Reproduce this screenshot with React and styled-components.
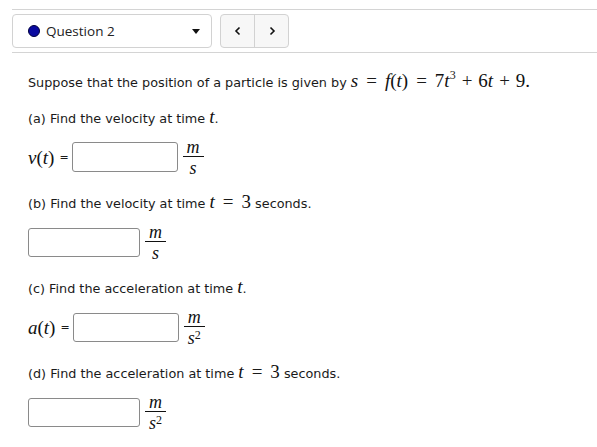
import React from 'react';
import styled, { createGlobalStyle } from 'styled-components';

const Global = createGlobalStyle`
  html, body { margin: 0; padding: 0; background: #fff; }
  body {
    font-family: "DejaVu Sans", Verdana, sans-serif;
    color: #1a1a1a;
    font-size: 12.8px;
  }
`;

const Page = styled.div`
  width: 597px;
  height: 447px;
  overflow: hidden;
  padding-top: 9px;
  box-sizing: border-box;
`;

const Header = styled.div`
  margin-left: 12px;
  border-top: 1px solid #d4d4d4;
  border-bottom: 1px solid #d4d4d4;
  padding: 4px 0;
  display: flex;
  gap: 8px;
`;

const Select = styled.div`
  width: 200px;
  height: 34px;
  box-sizing: border-box;
  border: 1px solid #d2d2d2;
  border-radius: 4px;
  display: flex;
  align-items: center;
  padding: 0 10px 0 15px;
  font-family: "Open Sans", sans-serif;
  font-size: 13.5px;
  color: #222;
`;

const Dot = styled.span`
  width: 12px;
  height: 12px;
  border-radius: 50%;
  background: #0a0aa0;
  border: 1px solid #000040;
  box-sizing: border-box;
  margin-right: 6px;
`;

const Caret = styled.span`
  margin-left: auto;
  width: 0;
  height: 0;
  border-left: 4px solid transparent;
  border-right: 4px solid transparent;
  border-top: 5px solid #111;
  margin-right: 1px;
`;

const NavGroup = styled.div`
  display: flex;
  height: 34px;
  border: 1px solid #d2d2d2;
  border-radius: 4px;
  background: #f7f7f7;
  box-sizing: border-box;
`;

const NavButton = styled.div`
  width: 33px;
  display: flex;
  align-items: center;
  justify-content: center;
  & + & { border-left: 1px solid #d2d2d2; }
`;

const Body = styled.div`
  padding: 0 28px;
`;

const Para = styled.p`
  margin: ${p => p.$top}px 0 0;
  height: 18px;
  line-height: 18px;
  white-space: nowrap;
`;

const M = styled.span`
  font-family: "Liberation Serif", "DejaVu Serif", serif;
  font-style: ${p => (p.$up ? 'normal' : 'italic')};
  font-size: 19px;
  line-height: 1;
  color: #111;
`;

const Op = styled.span`
  font-family: "Liberation Serif", "DejaVu Serif", serif;
  font-size: 19px;
  line-height: 1;
  margin: 0 ${p => p.$sp || 6}px;
`;

const AnswerRow = styled.div`
  display: flex;
  align-items: center;
  margin-top: 14px;
  height: 36px;
`;

const Label = styled.span`
  display: inline-flex;
  align-items: center;
  white-space: nowrap;
`;

const Eq = styled.span`
  font-size: 11px;
  margin: 0 3px 0 5px;
`;

const Input = styled.div`
  width: ${p => p.$w}px;
  height: ${p => p.$h || 30}px;
  box-sizing: border-box;
  border: 1px solid #8a8a8a;
  border-radius: 3px;
  background: #fff;
`;

const Frac = styled.span`
  display: inline-flex;
  flex-direction: column;
  align-items: center;
  margin-left: 5px;
  font-family: "Liberation Serif", "DejaVu Serif", serif;
  font-style: italic;
  font-size: 18px;
  line-height: 14px;
  color: #111;
`;

const Bar = styled.span`
  width: 21px;
  height: 1px;
  background: #111;
  margin: 2px 0 4px;
`;

const Sup = styled.sup`
  font-family: "Liberation Serif", "DejaVu Serif", serif;
  font-style: normal;
  font-size: 12px;
  line-height: 0;
  vertical-align: ${p => p.$v || 8}px;
`;

const Chevron = ({ dir }) => (
  <svg width="8" height="10" viewBox="0 0 8 10">
    <path
      d={dir === 'left' ? 'M5.5 1.5 L2 5 L5.5 8.5' : 'M2.5 1.5 L6 5 L2.5 8.5'}
      fill="none"
      stroke="#111"
      strokeWidth="1.6"
    />
  </svg>
);

const Fraction = ({ squared }) => (
  <Frac>
    <span>m</span>
    <Bar />
    <span>s{squared && <Sup $v={5}>2</Sup>}</span>
  </Frac>
);

const App = () => (
  <Page>
    <Global />
    <Header>
      <Select>
        <Dot />
        Question 2
        <Caret />
      </Select>
      <NavGroup>
        <NavButton><Chevron dir="left" /></NavButton>
        <NavButton><Chevron dir="right" /></NavButton>
      </NavGroup>
    </Header>
    <Body>
      <Para $top={18}>
        Suppose that the position of a particle is given by <M>s</M>
        <Op $sp={8}>=</Op>
        <M>f</M><M $up>(</M><M>t</M><M $up>)</M>
        <Op $sp={8}>=</Op>
        <M $up>7</M><M>t</M><Sup>3</Sup>
        <Op>+</Op>
        <M $up>6</M><M>t</M>
        <Op>+</Op>
        <M $up>9.</M>
      </Para>
      <Para $top={18}>(a) Find the velocity at time <M>t</M>.</Para>
      <AnswerRow>
        <Label><M>v</M><M $up>(</M><M>t</M><M $up>)</M><Eq>=</Eq></Label>
        <Input $w={106} />
        <Fraction />
      </AnswerRow>
      <Para $top={17}>(b) Find the velocity at time <M>t</M><Op $sp={8}>=</Op><M $up>3</M> seconds.</Para>
      <AnswerRow>
        <Input $w={112} $h={29} />
        <Fraction />
      </AnswerRow>
      <Para $top={17}>(c) Find the acceleration at time <M>t</M>.</Para>
      <AnswerRow>
        <Label><M>a</M><M $up>(</M><M>t</M><M $up>)</M><Eq>=</Eq></Label>
        <Input $w={106} $h={29} />
        <Fraction squared />
      </AnswerRow>
      <Para $top={17}>(d) Find the acceleration at time <M>t</M><Op $sp={8}>=</Op><M $up>3</M> seconds.</Para>
      <AnswerRow>
        <Input $w={112} $h={29} />
        <Fraction squared />
      </AnswerRow>
    </Body>
  </Page>
);

export default App;
